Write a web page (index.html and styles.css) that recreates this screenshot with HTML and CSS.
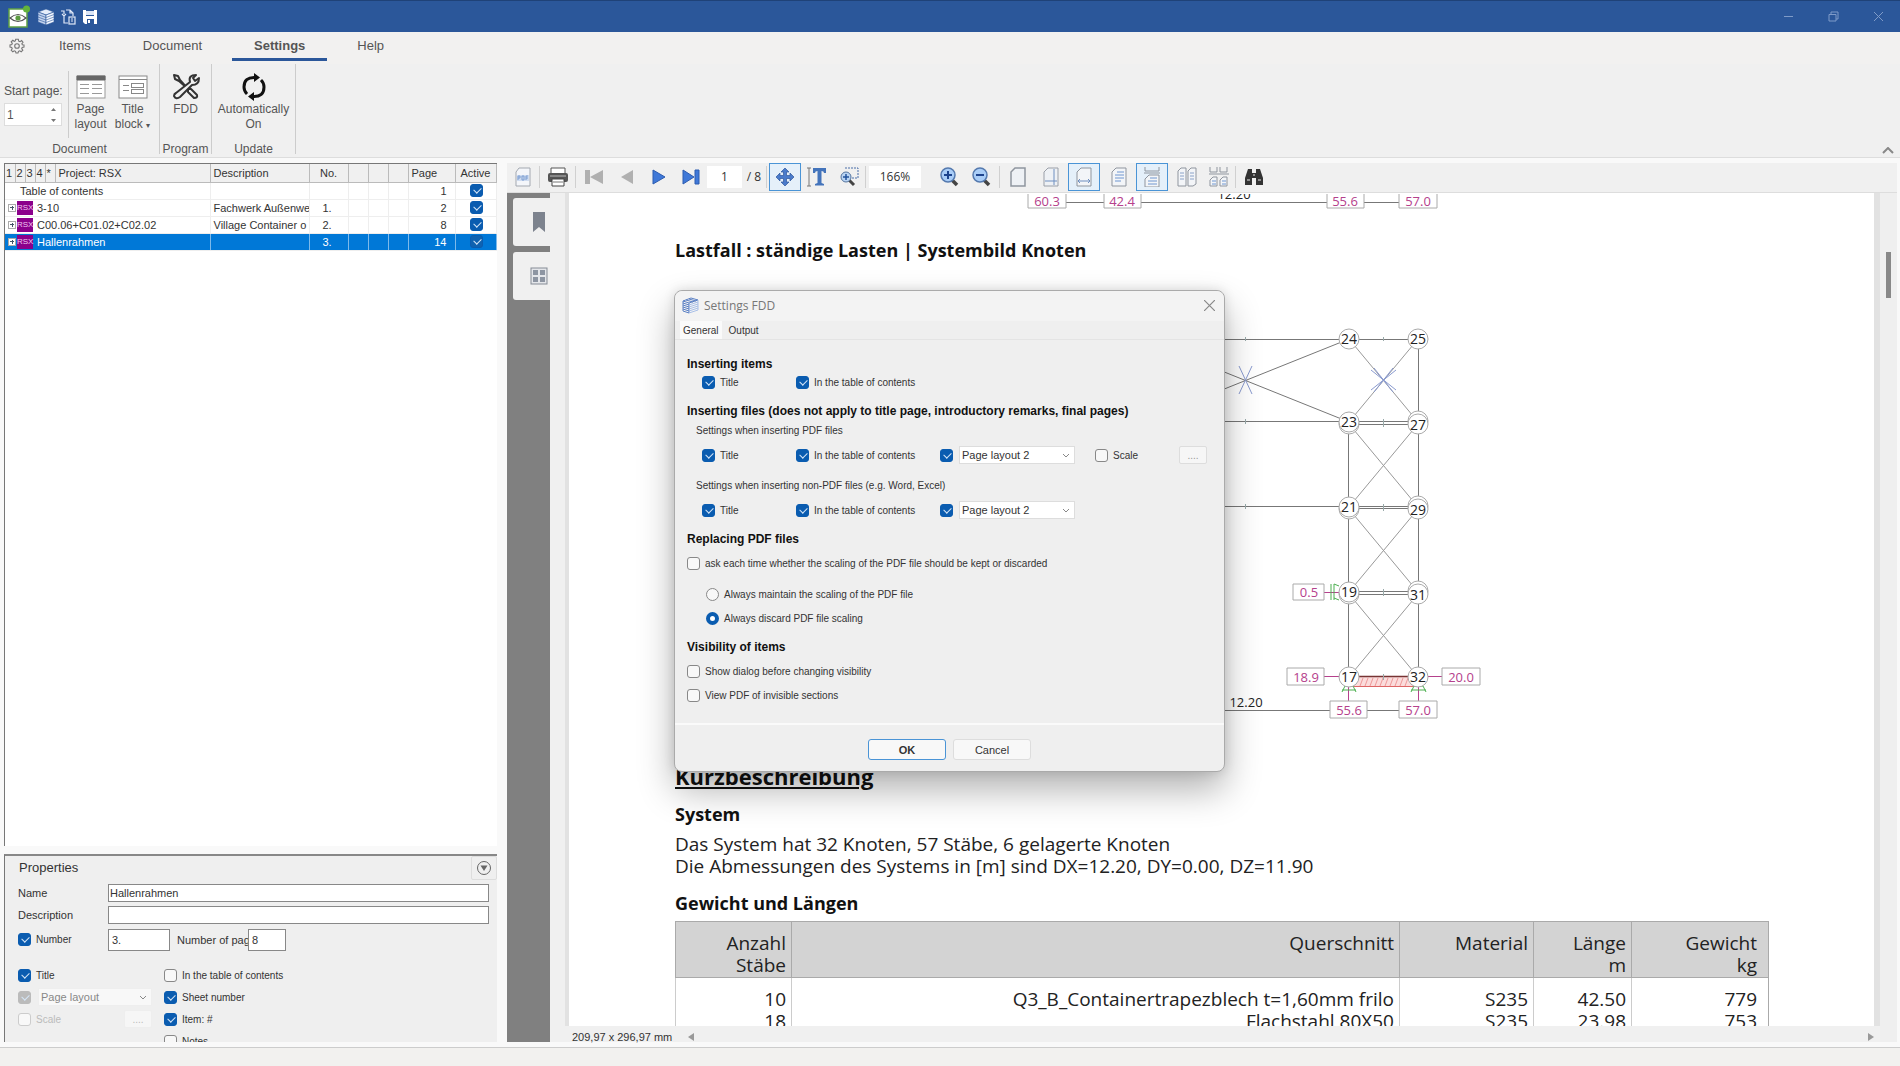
FILE: index.html
```html
<!DOCTYPE html>
<html lang="en">
<head>
    <meta charset="UTF-8">
    <meta name="viewport" content="width=device-width, initial-scale=1.0">
    <title>Settings FDD</title>
    <link rel="stylesheet" href="styles.css">
</head>
<body>
    <header class="titlebar">
        <svg class="app-logo" width="22" height="24" viewBox="0 0 22 24">
            <rect x="1" y="4" width="18" height="18" fill="#fff" stroke="#5fa045" stroke-width="1.5"/>
            <path d="M2 13 Q10 6 18 13 Q10 20 2 13Z" fill="none" stroke="#555" stroke-width="1.2"/>
            <circle cx="10" cy="13" r="2.6" fill="#5c9a40"/>
            <circle cx="18.500" cy="4" r="3.500" fill="#63b33b"/>
        </svg>
        <svg width="16" height="16" viewBox="0 0 16 16" stroke="#2b579a" stroke-width=".6">
            <path d="M8 0 16 3 8 6 0 3Z" fill="#e6eefb"/>
            <path d="M0 3 8 6V16L0 13Z" fill="#c3d3ee"/>
            <path d="M16 3 8 6V16L16 13Z" fill="#f4f8ff"/>
            <path d="M0 5.500 8 8.500 16 5.500M0 8 8 11 16 8M0 10.500 8 13.500 16 10.500" fill="none"/>
        </svg>
        <svg width="15" height="16" viewBox="0 0 15 16" fill="none" stroke="#dfe8f7" stroke-width="1.2">
            <path d="M3 6V14H7M5 1H9L12 4V7M9 1V4H12M0 2H3V5M1 5 3 7 5 5"/>
            <rect x="8" y="8" width="6" height="7"/><path d="M10 10H12M10 12H12"/>
        </svg>
        <svg width="14" height="14" viewBox="0 0 14 14">
            <path d="M0 0H14V14H2L0 12Z" fill="#fff"/><path d="M3 0H11V6H3Z" fill="#2b579a"/><path d="M3 1H11V5H3Z" fill="#dce6f5"/><path d="M4 9H11V14H4Z" fill="#2b579a"/><path d="M5 10H7V13H5Z" fill="#fff"/>
        </svg>
        <div class="window-buttons">
            <button aria-label="Minimize"><svg width="11" height="11" viewBox="0 0 11 11"><path d="M1 5.500H10"/></svg></button>
            <button aria-label="Restore"><svg width="11" height="11" viewBox="0 0 11 11"><path d="M1 3.500H8V10H1ZM3 3V1H10V8H8"/></svg></button>
            <button aria-label="Close"><svg width="11" height="11" viewBox="0 0 11 11"><path d="M1 1 10 10M10 1 1 10"/></svg></button>
        </div>
    </header>

    <nav class="tabs">
        <button class="gear" aria-label="Options">
            <svg width="16" height="16" viewBox="0 0 16 16" fill="none" stroke="#777" stroke-width="1.1">
                <path d="M6.700 1.200H9.300L9.700 3.100 11 3.700 12.600 2.600 14 4.300 12.900 5.600 13.300 6.700 15 7V9L13.200 9.400 12.700 10.700 13.800 12.200 12.200 13.800 10.700 12.800 9.500 13.300 9 15H7L6.500 13.300 5.300 12.800 3.800 13.800 2.200 12.200 3.200 10.700 2.700 9.400 1 9V7L2.800 6.600 3.300 5.300 2.200 3.800 3.800 2.300 5.300 3.300 6.300 2.900Z"/>
                <circle cx="8" cy="8" r="2.300"/>
            </svg>
        </button>
        <button class="tab">Items</button>
        <button class="tab">Document</button>
        <button class="tab active">Settings</button>
        <button class="tab">Help</button>
    </nav>

    <section class="ribbon">
        <div class="group group-document">
            <div class="group-items">
                <div class="start-page">
                    <label for="startPage">Start page:</label>
                    <div class="spin">
                        <input type="text" id="startPage" value="1">
                        <svg width="7" height="16" viewBox="0 0 7 16" fill="#777"><path d="M1 4 3.500 1 6 4ZM1 12 3.500 15 6 12Z"/></svg>
                    </div>
                </div>
                <button class="tool">
                    <svg width="30" height="24" viewBox="0 0 30 24" fill="none" stroke="#999"><rect x="1" y="1" width="28" height="22" fill="#fff"/><path d="M1 1H29V5H1Z" fill="#666" stroke="#666"/><path d="M4 9.500H13M4 13.500H13M4 18.500H13M16 9.500H26M16 13.500H26M16 18.500H26"/></svg>
                    Page<br>layout
                </button>
                <button class="tool">
                    <svg width="30" height="24" viewBox="0 0 30 24" fill="none" stroke="#888"><rect x="1" y="1" width="28" height="22" fill="#fff"/><path d="M1 4.500H29M5 10.500H11M5 15.500H11"/><rect x="13.500" y="8.500" width="12" height="4"/><rect x="13.500" y="14.500" width="12" height="4"/></svg>
                    Title<br>block <small>▾</small>
                </button>
            </div>
            <div class="group-name">Document</div>
        </div>
        <div class="group group-program">
            <div class="group-items">
                <button class="tool">
                    <svg width="28" height="28" viewBox="0 0 28 28" fill="#f0f0f0" stroke="#333" stroke-width="2" stroke-linejoin="round">
                        <path d="M2 2 6 3 8 7 16 16 19 16 25 22Q26 25 22 25L16 19V16L7 8 3 6Z"/>
                        <path d="M18 9Q16 2 24 2L21 5 23 8 27 5Q27 12 20 12L8 24Q4 27 2 23 2 21 4 20Z"/>
                    </svg>
                    FDD
                </button>
            </div>
            <div class="group-name">Program</div>
        </div>
        <div class="group group-update">
            <div class="group-items">
                <button class="tool">
                    <svg width="28" height="28" viewBox="0 0 28 28" fill="none" stroke="#111" stroke-width="3">
                        <path d="M15 4.500Q4 4 4 14 4 18 7 21M13 23.500Q24 24 24 14 24 10 21 7"/>
                        <path d="M14 0 20 4.500 14 9ZM14 19 8 23.500 14 28Z" fill="#111" stroke="none"/>
                    </svg>
                    Automatically<br>On
                </button>
            </div>
            <div class="group-name">Update</div>
        </div>
        <button class="collapse" aria-label="Collapse ribbon"><svg width="12" height="7" viewBox="0 0 12 7" fill="none" stroke="#888" stroke-width="2"><path d="M1 6 6 1 11 6"/></svg></button>
    </section>

    <main class="workspace">
        <aside class="left">
            <div class="tree">
                <table>
                    <colgroup>
                        <col class="c-level"><col class="c-level"><col class="c-level"><col class="c-level"><col class="c-level">
                        <col class="c-project"><col class="c-desc"><col class="c-no"><col class="c-flag"><col class="c-flag"><col class="c-flag"><col class="c-page"><col class="c-active">
                    </colgroup>
                    <thead>
                        <tr><th>1</th><th>2</th><th>3</th><th>4</th><th>*</th><th>Project: RSX</th><th>Description</th><th class="center">No.</th><th></th><th></th><th></th><th class="page">Page</th><th class="center">Active</th></tr>
                    </thead>
                    <tbody>
                        <tr><td colspan="6" class="plain">Table of contents</td><td></td><td></td><td></td><td></td><td></td><td class="num">1</td><td class="center"><input type="checkbox" aria-label="Table of contents active" checked></td></tr>
                        <tr><td colspan="6"><div class="item"><span class="expand"></span><span class="rsx">RSX</span>3-10</div></td><td>Fachwerk Außenwe</td><td class="no">1.</td><td></td><td></td><td></td><td class="num">2</td><td class="center"><input type="checkbox" aria-label="3-10 active" checked></td></tr>
                        <tr><td colspan="6"><div class="item"><span class="expand"></span><span class="rsx">RSX</span>C00.06+C01.02+C02.02</div></td><td>Village Container o</td><td class="no">2.</td><td></td><td></td><td></td><td class="num">8</td><td class="center"><input type="checkbox" aria-label="C00.06 active" checked></td></tr>
                        <tr class="selected"><td colspan="6"><div class="item"><span class="expand"></span><span class="rsx">RSX</span>Hallenrahmen</div></td><td></td><td class="no">3.</td><td></td><td></td><td></td><td class="num">14</td><td class="center"><input type="checkbox" aria-label="Hallenrahmen active" checked></td></tr>
                    </tbody>
                </table>
            </div>

            <section class="properties">
                <div class="properties-head">
                    <h2>Properties</h2>
                    <button aria-label="Collapse properties"><svg width="16" height="16" viewBox="0 0 16 16"><circle cx="8" cy="8" r="6.500" fill="none" stroke="#666"/><path d="M4.500 5.500H11.500L8 11Z" fill="#666"/></svg></button>
                </div>
                <div class="field"><label for="name">Name</label><input type="text" id="name" value="Hallenrahmen"></div>
                <div class="field"><label for="description">Description</label><input type="text" id="description"></div>
                <div class="field numbers">
                    <label class="check"><input type="checkbox" checked>Number</label>
                    <input type="text" class="number" value="3." aria-label="Number">
                    <label for="pages" class="pages-label">Number of pag</label>
                    <input type="text" id="pages" class="pages" value="8">
                </div>
                <div class="options">
                    <div class="option-col">
                        <label class="check"><input type="checkbox" checked>Title</label>
                        <div class="layout-row">
                            <input type="checkbox" aria-label="Use page layout" checked disabled>
                            <select disabled aria-label="Page layout"><option>Page layout</option></select>
                        </div>
                        <div class="scale-row">
                            <label class="check off"><input type="checkbox" disabled>Scale</label>
                            <button class="dots" disabled>....</button>
                        </div>
                    </div>
                    <div class="option-col">
                        <label class="check"><input type="checkbox">In the table of contents</label>
                        <label class="check"><input type="checkbox" checked>Sheet number</label>
                        <label class="check"><input type="checkbox" checked>Item: #</label>
                        <label class="check"><input type="checkbox">Notes</label>
                    </div>
                </div>
            </section>
        </aside>

        <section class="viewer">
            <div class="toolbar">
                <button aria-label="PDF"><svg width="16" height="20" viewBox="0 0 16 20"><path d="M4 1H15V19H1V5Z" fill="#f4f6fa" stroke="#a3a8b0"/><rect x="2" y="8" width="12" height="6" fill="#cfdcf0"/><path d="M3 13V9H5V11H3M7 9V13H9V9ZM11 13V9H13M11 11H13" fill="none" stroke="#7c9ed2"/></svg></button>
                <i></i>
                <button aria-label="Print"><svg width="22" height="20" viewBox="0 0 22 20"><path d="M4 1H18V7H4Z" fill="#fff" stroke="#555"/><rect x="1" y="6" width="20" height="9" rx="2" fill="#555"/><path d="M3 9H19" stroke="#bbb"/><path d="M5 12H17V19H5Z" fill="#fff" stroke="#444"/><path d="M6 15H16" stroke="#777"/></svg></button>
                <i></i>
                <button class="nav" aria-label="First page"><svg width="18" height="16" viewBox="0 0 18 16" fill="#b0b0b0"><path d="M0 1H5V15H0ZM18 1V15L5 8Z"/></svg></button>
                <button class="nav" aria-label="Previous page"><svg width="14" height="16" viewBox="0 0 14 16" fill="#b0b0b0"><path d="M13 1V15L1 8Z"/></svg></button>
                <button class="nav" aria-label="Next page"><svg width="14" height="16" viewBox="0 0 14 16" fill="#3f78d8" stroke="#2d5cb0"><path d="M1 1V15L13 8Z"/></svg></button>
                <button class="nav" aria-label="Last page"><svg width="18" height="16" viewBox="0 0 18 16" fill="#3f78d8" stroke="#2d5cb0"><path d="M1 1V15L12 8ZM13 1H17V15H13Z"/></svg></button>
                <input type="text" class="page-no" value="1" aria-label="Page">
                <span class="page-count">/ 8</span>
                <i></i>
                <button class="pan on" aria-label="Pan"><svg width="20" height="20" viewBox="0 0 20 20" fill="#4a7bcb" stroke="#2e569c" stroke-width=".7"><path d="M10 1 14 5H11.500V8.500H15V6L19 10 15 14V11.500H11.500V15H14L10 19 6 15H8.500V11.500H5V14L1 10 5 6V8.500H8.500V5H6Z"/></svg></button>
                <button aria-label="Select text"><svg width="20" height="20" viewBox="0 0 20 20"><path d="M0 1H4M2 1V19M0 19H4" stroke="#777" fill="none"/><path d="M6 1H19V6H17Q17 4 14.500 4V16L17 17V18.500H8V17L10.500 16V4Q8 4 8 6H6Z" fill="#4474bb"/></svg></button>
                <button aria-label="Zoom to selection"><svg width="20" height="20" viewBox="0 0 20 20"><path d="M6 1H19V11H13" fill="none" stroke="#4a6ea8" stroke-dasharray="2 1"/><path d="M10 13 15 18" stroke="#444" stroke-width="3"/><circle cx="7" cy="10" r="5" fill="#b9d4f3" stroke="#54749e"/><path d="M4 10H10M7 7V13" stroke="#23539d" stroke-width="1.500"/></svg></button>
                <i></i>
                <input type="text" class="zoom" value="166%" aria-label="Zoom">
                <button class="wide" aria-label="Zoom in"><svg width="20" height="20" viewBox="0 0 20 20"><path d="M12 12 18 18" stroke="#444" stroke-width="3.500"/><circle cx="9" cy="8" r="7" fill="#a9cdf7" stroke="#5479ae" stroke-width="1.500"/><path d="M5 8H13M9 4V12" stroke="#1d448e" stroke-width="2"/></svg></button>
                <button class="wide" aria-label="Zoom out"><svg width="20" height="20" viewBox="0 0 20 20"><path d="M12 12 18 18" stroke="#444" stroke-width="3.500"/><circle cx="9" cy="8" r="7" fill="#a9cdf7" stroke="#5479ae" stroke-width="1.500"/><path d="M5 8H13" stroke="#1d448e" stroke-width="2"/></svg></button>
                <i></i>
                <button class="doc" aria-label="Actual size"><svg width="16" height="20" viewBox="0 0 16 20"><path d="M5 1H15V19H1V5Z" fill="#eef1f5" stroke="#8f959e" stroke-width="1.500"/></svg></button>
                <button class="doc" aria-label="Fit page"><svg width="16" height="20" viewBox="0 0 16 20"><path d="M5 1H15V19H1V5Z" fill="#eef1f5" stroke="#9a9fa8"/><path d="M11 2V18M2 14H14" stroke="#6f8fc0"/></svg></button>
                <button class="doc on" aria-label="Fit width"><svg width="16" height="20" viewBox="0 0 16 20"><path d="M5 1H15V19H1V5Z" fill="#f3f5f8" stroke="#8f959e"/><path d="M2 14H14M2 14 4 12M2 14 4 16M14 14 12 12M14 14 12 16" stroke="#6f8fc0" fill="none"/></svg></button>
                <button class="doc" aria-label="Single page"><svg width="16" height="20" viewBox="0 0 16 20"><path d="M5 1H15V19H1V5Z" fill="#f3f5f8" stroke="#8f959e"/><path d="M6 5H13M4 8H13M4 11H13M4 14H10" stroke="#6f96d0"/></svg></button>
                <button class="doc on" aria-label="Continuous"><svg width="16" height="20" viewBox="0 0 16 20"><path d="M1 0V4H15V0M0 6H16" fill="none" stroke="#8f959e"/><path d="M5 8H15V20H1V12Z" fill="#f3f5f8" stroke="#8f959e"/><path d="M6 11H13M4 14H13M4 17H13" stroke="#6f96d0"/></svg></button>
                <button class="doc" aria-label="Two pages"><svg width="20" height="20" viewBox="0 0 20 20"><path d="M4 1H9V19H1V4ZM14 1H19V17L16 19H11V4Z" fill="#f3f5f8" stroke="#8f959e"/><path d="M3 6H7M3 9H7M3 12H7M13 6H17M13 9H17M13 12H17" stroke="#8aa2c8"/></svg></button>
                <button class="doc" aria-label="Two pages continuous"><svg width="20" height="20" viewBox="0 0 20 20"><path d="M1 0V5H8V0M11 0V5H18V0M0 7H20" fill="none" stroke="#8f959e"/><path d="M4 10H8V19H1V13ZM14 10H18V19H11V13Z" fill="#f3f5f8" stroke="#8f959e"/><path d="M3 14H7M3 17H7M13 14H17M13 17H17" stroke="#6f96d0"/></svg></button>
                <i></i>
                <button class="doc" aria-label="Find"><svg width="20" height="20" viewBox="0 0 20 20" fill="#333"><path d="M4 2H8V6H12V2H16L19 11V18H12V11H8V18H1V11Z"/><path d="M3 13H6M14 13H17M9 8H11" stroke="#aaa" stroke-width="1.500"/></svg></button>
            </div>

            <div class="viewer-body">
                <div class="side-tabs">
                    <button aria-label="Bookmarks"><svg width="12" height="20" viewBox="0 0 12 20"><path d="M0 0H12V20L6 15 0 20Z" fill="#7d838e"/></svg></button>
                    <button aria-label="Thumbnails"><svg width="18" height="18" viewBox="0 0 18 18"><rect x="1" y="1" width="16" height="16" fill="#e4e6ea" stroke="#858b95"/><path d="M3 3H8V8H3ZM10 3H15V8H10ZM3 10H8V15H3ZM10 10H15V15H10Z" fill="#8d95a2"/></svg></button>
                </div>
                <div class="page-area">
                    <article class="sheet">
                        <svg class="dim-top" viewBox="675 194 1095 16" width="1095" height="16">
                            <path d="M1066 202.500H1104M1141 202.500H1400" stroke="#777"/>
                            <g fill="#fff" stroke="#aaa"><path d="M1028 190H1066V208H1028ZM1104 190H1141V208H1104ZM1327 190H1364V208H1327ZM1399 190H1437V208H1399Z"/></g>
                            <g class="load"><text x="1047" y="206">60.3</text><text x="1122" y="206">42.4</text><text x="1345" y="206">55.6</text><text x="1418" y="206">57.0</text></g>
                            <text class="dim" x="1234" y="199">12.20</text>
                        </svg>
                        <h3>Lastfall : ständige Lasten | Systembild Knoten</h3>
                        <svg class="frame" viewBox="675 270 1095 490" width="1095" height="490">
                            <g fill="none" stroke="#777">
                                <path d="M700 339.500H1418M700 421.500H1418M700 506.500H1418M1349 424.500H1418M1349 508.500H1418M1349 591.500H1418M1349 594.500H1418"/>
                                <path d="M1349 339 1142 422M1349 422 1142 339M1348.500 422V677M1418.500 339V677"/>
                                <path d="M1349 339 1418 422M1418 339 1349 422M1349 424 1418 507M1418 424 1349 507M1349 509 1418 592M1418 509 1349 592M1349 594 1418 677M1418 594 1349 677" stroke="#999"/>
                            </g>
                            <path d="M1349 677H1418V687H1352Z" fill="#fbdcdc"/>
                            <path d="M1352 686.500H1415" stroke="#d66"/>
                            <path d="M1360 686 1363 678M1365 686 1368 678M1370 686 1373 678M1375 686 1378 678M1380 686 1383 678M1385 686 1388 678M1390 686 1393 678M1395 686 1398 678M1400 686 1403 678M1405 686 1408 678" stroke="#e99"/>
                            <path d="M1349 676.500H1418" stroke="#733" stroke-width="1.500"/>
                            <path d="M1239 366 1252 394M1252 366 1239 394M1371 370 1396 390M1396 370 1371 390M1374 368 1393 392M1393 368 1374 392" stroke="#8a9bd0" fill="none"/>
                            <path d="M1383.500 337V341M1383.500 419V427M1383.500 504V511M1383.500 589V596M1383.500 674V680M1245.500 337V341M1245.500 419V424M1245.500 504V509" stroke="#9aa"/>
                            <path d="M700 710.500H1418" stroke="#777"/>
                            <path d="M1324 592.500H1340M1324 676.500H1340M1428 676.500H1442M1348.500 687V702M1418.500 687V702" stroke="#b5418c"/>
                            <path d="M1331 584V600M1334 584V600M1339 586 1334 584M1339 600 1334 598M1342 692 1345 686H1353L1356 692M1411 692 1414 686H1423L1426 692M1342 690H1356M1411 690H1426" fill="none" stroke="#4caf50"/>
                            <g fill="#fff" stroke="#aaa">
                                <path d="M1293 584H1324V600H1293ZM1287 668H1324V685H1287ZM1442 668H1480V685H1442ZM1330 701H1367V718H1330ZM1399 701H1437V718H1399Z"/>
                                <circle cx="1349" cy="339" r="10"/><circle cx="1418" cy="339" r="10"/>
                                <circle cx="1349" cy="424" r="10"/><circle cx="1349" cy="422" r="10"/>
                                <circle cx="1418" cy="421" r="10"/><circle cx="1418" cy="424" r="10"/>
                                <circle cx="1349" cy="509" r="10"/><circle cx="1349" cy="507" r="10"/>
                                <circle cx="1418" cy="506" r="10"/><circle cx="1418" cy="509" r="10"/>
                                <circle cx="1349" cy="594" r="10"/><circle cx="1349" cy="592" r="10"/>
                                <circle cx="1418" cy="591" r="10"/><circle cx="1418" cy="594" r="10"/>
                                <circle cx="1349" cy="677" r="10"/><circle cx="1418" cy="677" r="10"/>
                            </g>
                            <g class="node">
                                <text x="1349" y="344">24</text><text x="1418" y="344">25</text>
                                <text x="1349" y="427">23</text><text x="1418" y="430">27</text>
                                <text x="1349" y="512">21</text><text x="1418" y="515">29</text>
                                <text x="1349" y="597">19</text><text x="1418" y="600">31</text>
                                <text x="1349" y="682">17</text><text x="1418" y="682">32</text>
                            </g>
                            <g class="load">
                                <text x="1309" y="597">0.5</text><text x="1306" y="682">18.9</text><text x="1461" y="682">20.0</text>
                                <text x="1349" y="715">55.6</text><text x="1418" y="715">57.0</text>
                            </g>
                            <text class="dim" x="1246" y="707">12.20</text>
                        </svg>
                        <h2>Kurzbeschreibung</h2>
                        <h3>System</h3>
                        <p>Das System hat 32 Knoten, 57 Stäbe, 6 gelagerte Knoten<br>Die Abmessungen des Systems in [m] sind DX=12.20, DY=0.00, DZ=11.90</p>
                        <h3>Gewicht und Längen</h3>
                        <table>
                            <thead>
                                <tr><th class="w-count">Anzahl<br>Stäbe</th><th>Querschnitt</th><th class="w-mat">Material</th><th class="w-len">Länge<br>m</th><th class="w-weight">Gewicht<br>kg</th></tr>
                            </thead>
                            <tbody>
                                <tr><td>10</td><td>Q3_B_Containertrapezblech t=1,60mm frilo</td><td>S235</td><td>42.50</td><td>779</td></tr>
                                <tr><td>18</td><td>Flachstahl 80X50</td><td>S235</td><td>23.98</td><td>753</td></tr>
                            </tbody>
                        </table>
                    </article>
                    <div class="page-foot">
                        <span>209,97 x 296,97 mm</span>
                        <svg width="6" height="8" viewBox="0 0 6 8"><path d="M6 0V8L0 4Z" fill="#999"/></svg>
                        <svg class="right" width="6" height="8" viewBox="0 0 6 8"><path d="M0 0V8L6 4Z" fill="#999"/></svg>
                    </div>
                </div>
                <div class="scrollbar"><div class="thumb"></div></div>
            </div>
        </section>
    </main>

    <footer class="statusbar"></footer>

    <div class="dialog" role="dialog" aria-labelledby="dialogTitle">
        <div class="dialog-title">
            <svg width="17" height="17" viewBox="0 0 17 17" fill="none" stroke="#5b80c4"><path d="M1 4 9 1 16 3 7 6ZM1 4V14L7 16V6M1 6 7 8M1 8 7 10M1 10 7 12M1 12 7 14"/><path d="M16 3V13L7 16M16 5 7 8M16 7 7 10M16 9 7 12M16 11 7 14" stroke="#a9c0e8"/><path d="M4 3 11 5M7 2 14 4"/></svg>
            <span id="dialogTitle">Settings FDD</span>
            <button aria-label="Close"><svg width="11" height="11" viewBox="0 0 11 11"><path d="M0 0 11 11M11 0 0 11" stroke="#888" stroke-width="1.200"/></svg></button>
        </div>
        <div class="dialog-tabs">
            <button class="active">General</button>
            <button>Output</button>
        </div>
        <div class="dialog-body">
            <h4>Inserting items</h4>
            <div class="row">
                <label class="check"><input type="checkbox" checked>Title</label>
                <label class="check"><input type="checkbox" checked>In the table of contents</label>
            </div>
            <h4>Inserting files (does not apply to title page, introductory remarks, final pages)</h4>
            <p>Settings when inserting PDF files</p>
            <div class="row gap">
                <label class="check"><input type="checkbox" checked>Title</label>
                <label class="check"><input type="checkbox" checked>In the table of contents</label>
                <input type="checkbox" aria-label="Use page layout for PDF files" checked>
                <select aria-label="Page layout for PDF files"><option>Page layout 2</option></select>
                <label class="check"><input type="checkbox">Scale</label>
                <button class="dots">....</button>
            </div>
            <p class="second">Settings when inserting non-PDF files (e.g. Word, Excel)</p>
            <div class="row gap">
                <label class="check"><input type="checkbox" checked>Title</label>
                <label class="check"><input type="checkbox" checked>In the table of contents</label>
                <input type="checkbox" aria-label="Use page layout for other files" checked>
                <select aria-label="Page layout for other files"><option>Page layout 2</option></select>
            </div>
            <h4>Replacing PDF files</h4>
            <label class="check gap">
                <input type="checkbox">ask each time whether the scaling of the PDF file should be kept or discarded
            </label>
            <div class="radios">
                <label class="check"><input type="radio" name="scaling">Always maintain the scaling of the PDF file</label>
                <label class="check"><input type="radio" name="scaling" checked>Always discard PDF file scaling</label>
            </div>
            <h4>Visibility of items</h4>
            <label class="check gap"><input type="checkbox">Show dialog before changing visibility</label>
            <label class="check gap"><input type="checkbox">View PDF of invisible sections</label>
        </div>
        <div class="dialog-buttons">
            <button class="ok">OK</button>
            <button>Cancel</button>
        </div>
    </div>
</body>
</html>
```
FILE: styles.css
```css
* {
    box-sizing: border-box;
}

body {
    margin: 0;
    height: 100vh;
    display: flex;
    flex-direction: column;
    overflow: hidden;
    position: relative;
    background-color: #f9f9f9;
    font-family: "Liberation Sans", Arial, sans-serif;
    font-size: 11px;
    color: #333;
}

button,
input,
select {
    font-family: inherit;
    font-size: inherit;
    color: inherit;
    margin: 0;
    padding: 0;
}

button {
    border: none;
    background: none;
}

svg {
    display: block;
    flex: none;
}

h2, h3, h4, p {
    margin: 0;
}

/* Title bar */
.titlebar {
    display: flex;
    align-items: center;
    gap: 7px;
    height: 32px;
    padding: 0 16px 0 8px;
    background-color: #2b579a;
    border-top: 1px solid #1f4278;
}

.app-logo {
    margin-right: 1px;
}

.window-buttons {
    display: flex;
    gap: 34px;
    margin-left: auto;
}

.window-buttons svg {
    fill: none;
    stroke: #7f9bc8;
}

/* Ribbon */
.tabs {
    display: flex;
    height: 32px;
    padding-left: 5px;
    gap: 8px;
    background-color: #f2f1f0;
}

.gear {
    width: 24px;
    display: flex;
    align-items: center;
    justify-content: center;
    padding-bottom: 4px;
}

.tab {
    padding: 0 22px;
    font-size: 13px;
    color: #555;
    border-bottom: 3px solid transparent;
    margin-bottom: 3px;
}

.tab.active {
    font-weight: bold;
    border-color: #2b579a;
}

.ribbon {
    display: flex;
    height: 94px;
    background-color: #f0f0f0;
    border-bottom: 1px solid #ddd;
    font-size: 12px;
    color: #555;
}

.group {
    display: flex;
    flex-direction: column;
    border-right: 1px solid #ccc;
    margin-bottom: 3px;
}

.group-document {
    width: 160px;
}

.group-program {
    width: 52px;
}

.group-update {
    width: 84px;
}

.group-items {
    display: flex;
    flex: 1;
}

.group-name {
    text-align: center;
    line-height: 12px;
    height: 11px;
}

.start-page {
    display: flex;
    flex-direction: column;
    flex: none;
    gap: 5px;
    width: 69px;
    margin: 7px 0 5px;
    padding: 13px 0 0 4px;
    border-right: 1px solid #ccc;
    white-space: nowrap;
}

.spin {
    display: flex;
    align-items: center;
    width: 58px;
    height: 23px;
    border: 1px solid #ddd;
    background-color: #fff;
}

.spin input {
    width: 45px;
    padding-left: 2px;
    border: none;
}

.tool {
    flex: 1;
    line-height: 15px;
    white-space: nowrap;
}

.tool svg {
    height: 28px;
    margin: 0 auto 1px;
}

.group .tool {
    display: flex;
    flex-direction: column;
    justify-content: flex-start;
    padding-top: 9px;
}

.group-document .tool,
.group-program .tool,
.group-update .tool {
    display: block;
    align-self: flex-start;
}

.group-document .tool {
    flex: none;
    width: 41px;
    margin-left: 1px;
}

.tool small {
    font-size: 8px;
}

.collapse {
    margin: auto 6px 3px auto;
}

/* Workspace */
.workspace {
    flex: 1;
    display: flex;
    gap: 10px;
    min-height: 0;
    padding: 5px 3px 5px 4px;
}

.left {
    width: 493px;
    flex: none;
    display: flex;
    flex-direction: column;
    gap: 8px;
}

.tree {
    flex: 1;
    background-color: #fff;
    border-left: 1px solid #777;
    border-top: 1px solid #777;
}

.tree table {
    table-layout: fixed;
    width: 491px;
    border-collapse: collapse;
}

.c-level { width: 10px; }
.c-project { width: 155px; }
.c-desc { width: 99px; }
.c-no { width: 39px; }
.c-flag { width: 20px; }
.c-page { width: 47px; }
.c-active { width: 41px; }

.tree th,
.tree td {
    height: 17px;
    padding: 0 2px 0 3px;
    text-align: left;
    font-weight: normal;
    line-height: 14px;
    white-space: nowrap;
    overflow: hidden;
    border-right: 1px solid #eee;
    border-bottom: 1px solid #eee;
}

.tree th {
    height: 18px;
    padding: 0 1px;
    background-color: #f0f0f0;
    border-color: #bbb;
}

.tree th:nth-child(6),
.tree th:nth-child(7) {
    padding-left: 3px;
}

.tree .center {
    text-align: center;
}

.tree .page {
    padding-left: 3px;
}

.tree .num {
    text-align: right;
    padding-right: 8px;
}

.tree .no {
    padding-left: 13px;
}

.tree .plain {
    padding-left: 15px;
}

.tree td input {
    display: block;
    margin: 0 auto;
}

.tree .selected td {
    background-color: #0078d7;
    color: #fff;
    border-right-color: #7db9ea;
}

.selected input[type="checkbox"]:checked {
    background-color: #0f62b0;
}

.item {
    display: flex;
    align-items: center;
}

.expand {
    width: 8px;
    height: 8px;
    margin-right: 1px;
    border: 1px solid #aaa;
    background: linear-gradient(#456, #456) center / 4px 1px no-repeat, linear-gradient(#456, #456) center / 1px 4px no-repeat, #fff;
}

.rsx {
    width: 16px;
    height: 14px;
    margin-right: 4px;
    background-color: #8b008b;
    color: #f0c8f0;
    font-size: 8px;
    text-align: center;
}

/* Checkboxes and radios */
input[type="checkbox"],
input[type="radio"] {
    appearance: none;
    flex: none;
    position: relative;
    width: 13px;
    height: 13px;
    border: 1px solid #888;
    border-radius: 3px;
    background-color: #f8f8f8;
}

input[type="checkbox"]:checked {
    background-color: #0a5cb0;
    border-color: #0a5cb0;
}

input[type="checkbox"]:checked::after {
    content: "";
    position: absolute;
    left: 3px;
    top: 2px;
    width: 6px;
    height: 4px;
    border: solid #d5e6f7;
    border-width: 0 0 1px 1px;
    transform: rotate(-45deg);
}

input[type="checkbox"]:disabled {
    border-color: #ccc;
}

input[type="checkbox"]:checked:disabled {
    background-color: #bbb;
    border-color: #bbb;
}

input[type="radio"] {
    border-radius: 50%;
}

input[type="radio"]:checked {
    border: 4px solid #0a5cb0;
    background-color: #fff;
}

.check {
    display: flex;
    align-items: center;
    gap: 5px;
    height: 18px;
    font-size: 10px;
    white-space: nowrap;
}

select {
    appearance: none;
    height: 18px;
    padding: 0 2px;
    border: 1px solid #ddd;
    background: #fff url("data:image/svg+xml,%3Csvg xmlns='http://www.w3.org/2000/svg' width='8' height='5'%3E%3Cpath d='M1 1 4 4 7 1' fill='none' stroke='%23888'/%3E%3C/svg%3E") right 4px center no-repeat;
}

select:disabled {
    color: #888;
    opacity: 1;
    border-color: #eee;
    background-color: #f8f8f8;
}

.dots {
    width: 28px;
    height: 18px;
    border: 1px solid #ddd;
    border-radius: 2px;
    background-color: #f6f6f6;
    color: #999;
    font-size: 10px;
}

/* Properties */
.properties {
    flex: none;
    height: 188px;
    overflow: hidden;
    border-left: 1px solid #777;
    border-top: 2px solid #888;
    background-color: #efefef;
}

.properties-head {
    display: flex;
    justify-content: space-between;
    height: 27px;
    padding-left: 14px;
}

.properties-head h2 {
    font-size: 13px;
    line-height: 24px;
    font-weight: normal;
}

.properties-head button {
    width: 26px;
    height: 24px;
    display: flex;
    align-items: center;
    justify-content: center;
    border: 1px solid #ddd;
    border-radius: 2px;
}

.field {
    display: flex;
    align-items: center;
    margin: 1px 8px 4px 13px;
    height: 18px;
}

.field > label:first-child {
    width: 90px;
}

.field input[type="text"] {
    flex: 1;
    height: 18px;
    padding: 0 1px;
    border: 1px solid #888;
    background-color: #fff;
}

.field.numbers {
    height: 23px;
    margin-bottom: 15px;
}

.field.numbers input[type="text"] {
    flex: none;
    height: 22px;
    padding: 0 3px;
}

.field.numbers .number {
    width: 62px;
}

.field.numbers .pages {
    width: 38px;
}

.pages-label {
    width: 71px;
    margin-left: 7px;
    white-space: nowrap;
}

.options {
    display: flex;
    padding-left: 13px;
    gap: 12px;
}

.option-col {
    display: flex;
    flex-direction: column;
    gap: 4px;
    width: 134px;
}

.layout-row,
.scale-row {
    display: flex;
    align-items: center;
    justify-content: space-between;
}

.layout-row select {
    width: 114px;
}

.off {
    color: #bbb;
}

.dots:disabled {
    color: #bbb;
    border-color: #eee;
}

/* Viewer */
.viewer {
    flex: 1;
    display: flex;
    flex-direction: column;
    min-width: 0;
}

.toolbar {
    display: flex;
    align-items: center;
    height: 30px;
    flex: none;
    background-color: #f0f0f0;
    border-bottom: 1px solid #ddd;
    padding-bottom: 2px;
}

.toolbar i {
    width: 1px;
    height: 22px;
    background-color: #d0d0d0;
}

.toolbar button {
    width: 32px;
    height: 28px;
    display: flex;
    align-items: center;
    justify-content: center;
}

.toolbar button + i + button {
    width: 35px;
}

.toolbar .on {
    border: 1px solid #4a94d6;
    background-color: #e5f0fa;
}

.toolbar .pan {
    margin-left: 2px;
}

.toolbar .doc.on {
    margin: 0 3px 0 1px;
}

.toolbar input {
    height: 22px;
    border: none;
    background-color: #fff;
    text-align: center;
    font-size: 12px;
    font-family: "Open Sans", sans-serif;
}

.page-no {
    width: 35px;
}

.page-count {
    width: 24px;
    text-align: center;
    font-size: 12px;
    font-family: "Open Sans", sans-serif;
}

.toolbar .zoom {
    width: 52px;
    margin: 0 12px 0 3px;
}

.wide + i {
    margin-left: 2px;
}

.viewer-body {
    flex: 1;
    display: flex;
    min-height: 0;
}

.side-tabs {
    display: flex;
    flex-direction: column;
    gap: 6px;
    width: 43px;
    padding: 5px 0 0 6px;
    background-color: #808080;
}

.side-tabs button {
    height: 48px;
    padding-left: 14px;
    display: flex;
    align-items: center;
    justify-content: center;
    border-radius: 3px 0 0 3px;
    background-color: #f0f0f0;
}

.page-area {
    flex: 1;
    display: flex;
    flex-direction: column;
    min-width: 0;
    background-color: #f0f0f0;
}

.sheet {
    flex: 1;
    min-height: 0;
    overflow: hidden;
    margin-left: 15px;
    padding: 1px 105px 0 106px;
    border-left: 4px solid #e2e2e2;
    border-right: 6px solid #e2e2e2;
    background-color: #fff;
    font-family: "Open Sans", "Noto Sans", sans-serif;
    font-size: 19px;
    line-height: 22px;
    color: #222;
}

.sheet h2,
.sheet h3 {
    font-size: 18px;
    line-height: 24px;
    color: #111;
}

.dim-top + h3 {
    padding: 28px 0 8px;
}

.sheet h2 {
    font-size: 22px;
    line-height: 28px;
    text-decoration: underline;
    padding-top: 2px;
    margin-bottom: 12px;
}

.sheet p {
    margin: 7px 0 14px;
}

.sheet text {
    text-anchor: middle;
    font-size: 13px;
    fill: #222;
}

.sheet .node text {
    font-size: 14px;
}

.sheet .load text {
    fill: #b5418c;
}

.sheet table {
    width: 100%;
    margin-top: 6px;
    border-collapse: collapse;
    border: 1px solid #aaa;
    text-align: right;
}

.sheet th {
    height: 56px;
    padding: 10px 5px 0;
    font-weight: normal;
    vertical-align: top;
    background-color: #d3d3d3;
    border: 1px solid #aaa;
}

.sheet td {
    padding: 0 5px;
    border-left: 1px solid #ccc;
}

.sheet tbody tr:first-child td {
    padding-top: 10px;
}

.sheet th:last-child,
.sheet td:last-child {
    padding-right: 11px;
}

.w-count { width: 116px; }
.w-mat { width: 134px; }
.w-len { width: 98px; }
.w-weight { width: 137px; }

.page-foot {
    display: flex;
    align-items: center;
    gap: 16px;
    height: 16px;
    padding: 5px 6px 0 22px;
}

.page-foot .right {
    margin-left: auto;
}

.scrollbar {
    width: 17px;
    padding: 59px 6px 0 6px;
    background-color: #efefef;
}

.thumb {
    height: 46px;
    background-color: #888;
}

.statusbar {
    height: 19px;
    border-top: 1px solid #ccc;
    background-color: #f2f1ef;
}

/* Settings dialog */
.dialog {
    position: absolute;
    left: 674px;
    top: 290px;
    width: 551px;
    border: 1px solid #aaa;
    border-radius: 8px;
    background-color: #efefef;
    box-shadow: 0 18px 36px rgba(0, 0, 0, 0.3), 0 0 12px rgba(0, 0, 0, 0.12);
}

.dialog-title {
    display: flex;
    align-items: center;
    gap: 5px;
    height: 30px;
    padding: 0 9px 2px 7px;
    border-radius: 8px 8px 0 0;
    background-color: #f3f3f3;
    font-family: "Open Sans", sans-serif;
    font-size: 12px;
    color: #777;
}

.dialog-title button {
    margin-left: auto;
}

.dialog-tabs {
    display: flex;
    gap: 4px;
    height: 19px;
    padding-left: 5px;
    border-bottom: 1px solid #e4e4e4;
}

.dialog-tabs button {
    padding: 0 3px;
    font-size: 10px;
}

.dialog-tabs .active {
    background-color: #fafafa;
}

.dialog-body {
    height: 385px;
    padding: 4px 12px 0;
    border-bottom: 2px solid #fafafa;
}

.dialog-body h4 {
    height: 18px;
    margin-top: 11px;
    line-height: 18px;
    font-size: 12px;
    color: #111;
}

.dialog-body p {
    height: 18px;
    margin-top: 2px;
    line-height: 18px;
    padding-left: 9px;
    font-size: 10px;
}

.dialog-body .second {
    margin-top: 13px;
}

.row {
    display: grid;
    grid-template-columns: 94px 144px 19px 116px 64px 28px;
    align-items: center;
    padding-left: 15px;
}

.row .check:nth-child(5) {
    margin-left: 20px;
}

.row .dots {
    margin-left: 40px;
}

.gap {
    margin-top: 6px;
}

.radios {
    display: flex;
    flex-direction: column;
    gap: 6px;
    margin-top: 13px;
    padding-left: 19px;
}

.dialog-buttons {
    display: flex;
    justify-content: center;
    gap: 7px;
    padding: 14px 0 11px;
}

.dialog-buttons button {
    width: 78px;
    height: 21px;
    border: 1px solid #ddd;
    border-radius: 3px;
    background-color: #f8f8f8;
}

.dialog-buttons .ok {
    border-color: #4a94d6;
    font-weight: bold;
}
```
